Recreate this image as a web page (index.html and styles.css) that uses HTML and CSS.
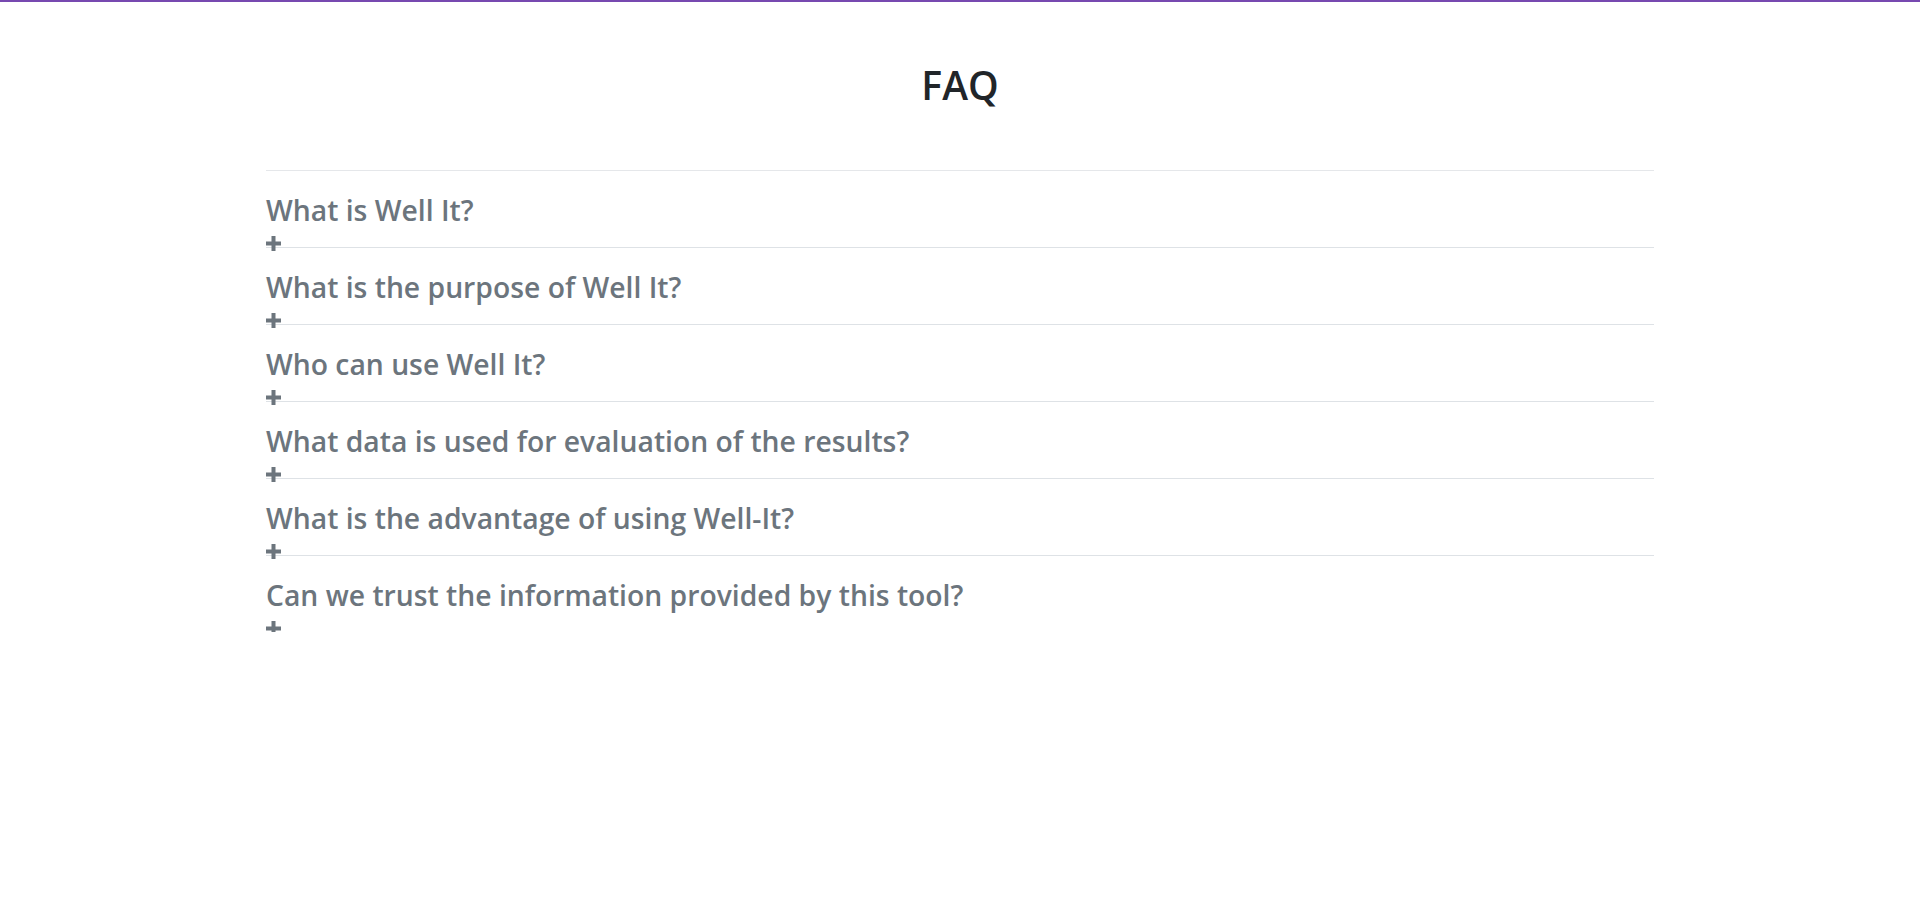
FILE: index.html
```html
<!DOCTYPE html>
<html lang="en">
<head>
<meta charset="utf-8">
<title>FAQ</title>
<link rel="stylesheet" href="styles.css">
</head>
<body>
<div class="topbar"></div>
<main class="faq">
  <h1 class="faq-title">FAQ</h1>
  <div class="faq-list">
    <div class="faq-item">
      <h4 class="faq-q">What is Well It?</h4>
      <div class="faq-toggle"><svg width="15" height="15" viewBox="0 0 15 15"><rect x="0" y="5.5" width="15" height="4"/><rect x="5.5" y="0" width="4" height="15"/></svg></div>
    </div>
    <div class="faq-item">
      <h4 class="faq-q">What is the purpose of Well It?</h4>
      <div class="faq-toggle"><svg width="15" height="15" viewBox="0 0 15 15"><rect x="0" y="5.5" width="15" height="4"/><rect x="5.5" y="0" width="4" height="15"/></svg></div>
    </div>
    <div class="faq-item">
      <h4 class="faq-q">Who can use Well It?</h4>
      <div class="faq-toggle"><svg width="15" height="15" viewBox="0 0 15 15"><rect x="0" y="5.5" width="15" height="4"/><rect x="5.5" y="0" width="4" height="15"/></svg></div>
    </div>
    <div class="faq-item">
      <h4 class="faq-q">What data is used for evaluation of the results?</h4>
      <div class="faq-toggle"><svg width="15" height="15" viewBox="0 0 15 15"><rect x="0" y="5.5" width="15" height="4"/><rect x="5.5" y="0" width="4" height="15"/></svg></div>
    </div>
    <div class="faq-item">
      <h4 class="faq-q">What is the advantage of using Well-It?</h4>
      <div class="faq-toggle"><svg width="15" height="15" viewBox="0 0 15 15"><rect x="0" y="5.5" width="15" height="4"/><rect x="5.5" y="0" width="4" height="15"/></svg></div>
    </div>
    <div class="faq-item">
      <h4 class="faq-q">Can we trust the information provided by this tool?</h4>
      <div class="faq-toggle"><svg width="15" height="15" viewBox="0 0 15 15"><rect x="0" y="5.5" width="15" height="4"/><rect x="5.5" y="0" width="4" height="15"/></svg></div>
    </div>
  </div>
</main>
</body>
</html>
```
FILE: styles.css
```css
html, body {
  margin: 0;
  padding: 0;
  background: #fff;
}
body {
  font-family: "Open Sans", "Noto Sans", sans-serif;
  color: #212529;
}
.topbar {
  height: 2px;
  background: #7749b0;
}
.faq {
  width: 1388px;
  margin: 0 auto;
}
.faq-title {
  margin: 60px 0 0;
  font-size: 39px;
  font-weight: 600;
  line-height: 1.2;
  text-align: center;
  color: #212529;
}
.faq-list {
  margin-top: 61px;
}
.faq-item {
  box-sizing: border-box;
  height: 77px;
  padding-top: 23px;
  border-top: 1px solid #dee2e6;
}
.faq-item:first-child {
  border-top-color: #e5e7ea;
}
.faq-q {
  margin: 0;
  font-size: 28.3px;
  font-weight: 600;
  line-height: 1.2;
  color: #6c757d;
}
.faq-toggle {
  margin-top: 8px;
  height: 15px;
  line-height: 0;
}
.faq-toggle svg {
  fill: #6c757d;
}
```
